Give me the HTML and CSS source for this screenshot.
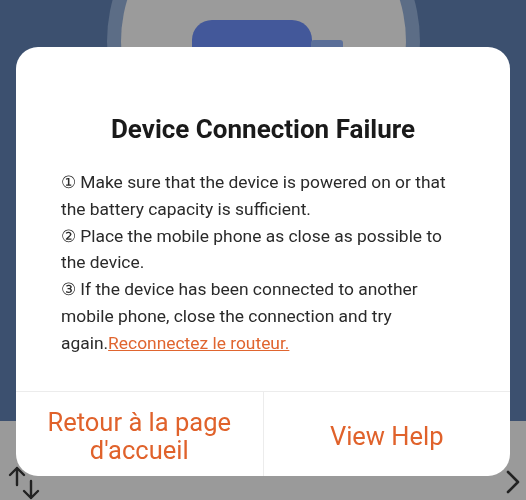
FILE: index.html
```html
<!DOCTYPE html>
<html lang="en">
<head>
    <meta charset="UTF-8">
    <meta name="viewport" content="width=device-width, initial-scale=1.0">
    <title>Device Connection Failure</title>
    <link rel="stylesheet" href="styles.css">
</head>
<body>

    <!-- Ekran w tle (przyciemniony) -->
    <div class="screen">
        <div class="hero">
            <div class="ring">
                <div class="disc">
                    <div class="device"><span class="device-tab"></span></div>
                </div>
            </div>
        </div>
        <div class="toolbar">
            <svg class="swap-icon" width="34" height="36" viewBox="0 0 34 36">
                <path d="M10 3 V20 M3 10 L10 3 L17 10" fill="none" stroke="#222" stroke-width="2.4" stroke-linecap="round" stroke-linejoin="round"/>
                <path d="M24 16 V33 M17 26 L24 33 L31 26" fill="none" stroke="#222" stroke-width="2.4" stroke-linecap="round" stroke-linejoin="round"/>
            </svg>
            <svg class="chevron-icon" width="16" height="24" viewBox="0 0 16 24">
                <path d="M3 2 L13 12 L3 22" fill="none" stroke="#222" stroke-width="2.6" stroke-linecap="round" stroke-linejoin="round"/>
            </svg>
        </div>
    </div>

    <!-- Okienko z błędem -->
    <div class="overlay">
        <div class="dialog">
            <h1 class="dialog-title">Device Connection Failure</h1>
            <p class="dialog-text">
                ① Make sure that the device is powered on or that the battery capacity is sufficient.<br>
                ② Place the mobile phone as close as possible to the device.<br>
                ③ If the device has been connected to another mobile phone, close the connection and try again.<a class="dialog-link" href="#">Reconnectez le routeur.</a>
            </p>
            <div class="dialog-actions">
                <button class="dialog-btn">Retour à la page d'accueil</button>
                <button class="dialog-btn">View Help</button>
            </div>
        </div>
    </div>

</body>
</html>
```

FILE: styles.css
```css
body {
    margin: 0;
    font-family: Roboto, "Liberation Sans", sans-serif;
    background-color: #9a9a9a;
    height: 500px;
    overflow: hidden;
}

/* Tło ekranu */
.screen {
    display: flex;
    flex-direction: column;
    height: 500px;
}

.hero {
    height: 421px;
    background-color: #3c506f;
    display: flex;
    justify-content: center;
    overflow: hidden;
}

.ring {
    flex-shrink: 0;
    width: 313px;
    height: 313px;
    margin-top: -115px;
    margin-left: 1px;
    border-radius: 50%;
    background-color: #5c6d86;
    display: flex;
    align-items: center;
    justify-content: center;
}

.disc {
    width: 285px;
    height: 285px;
    border-radius: 50%;
    background-color: #9b9b9b;
    display: flex;
    justify-content: center;
}

.device {
    position: relative;
    width: 120px;
    height: 80px;
    margin-top: 121px;
    margin-left: -24px;
    border-radius: 20px 20px 4px 4px;
    background-color: #43589a;
}

.device-tab {
    position: absolute;
    left: 119px;
    top: 20px;
    width: 32px;
    height: 30px;
    border-radius: 3px;
    background-color: #5b6f99;
}

.toolbar {
    flex: 1;
    display: flex;
    justify-content: space-between;
    align-items: flex-end;
    padding: 0 5px 0 7px;
}

.swap-icon {
    display: block;
    margin-bottom: -1px;
}

.chevron-icon {
    display: block;
    margin-bottom: 6px;
}

/* Okienko */
.overlay {
    position: fixed;
    top: 0;
    left: 0;
    right: 0;
    bottom: 0;
    display: flex;
    justify-content: center;
    padding-top: 47px;
}

.dialog {
    width: 494px;
    height: 429px;
    background-color: white;
    border-radius: 22px;
    display: flex;
    flex-direction: column;
    overflow: hidden;
}

.dialog-title {
    margin: 66px 0 0;
    font-size: 26px;
    font-weight: bold;
    line-height: 32px;
    text-align: center;
    color: #1a1a1a;
}

.dialog-text {
    margin: 24px 0 0;
    padding: 0 42px 0 45px;
    font-size: 17.4px;
    line-height: 26.8px;
    color: #2a2a2a;
    flex: 1;
}

.dialog-link {
    color: #e0652f;
    text-decoration: underline;
}

.dialog-actions {
    display: flex;
    height: 84px;
    border-top: 1px solid #ececec;
}

.dialog-btn {
    flex: 1;
    border: none;
    background: none;
    padding: 4px 20px 0;
    font-family: Roboto, "Liberation Sans", sans-serif;
    font-size: 25.5px;
    line-height: 28px;
    color: #e0622b;
    cursor: pointer;
}

.dialog-btn + .dialog-btn {
    border-left: 1px solid #ececec;
}
```
